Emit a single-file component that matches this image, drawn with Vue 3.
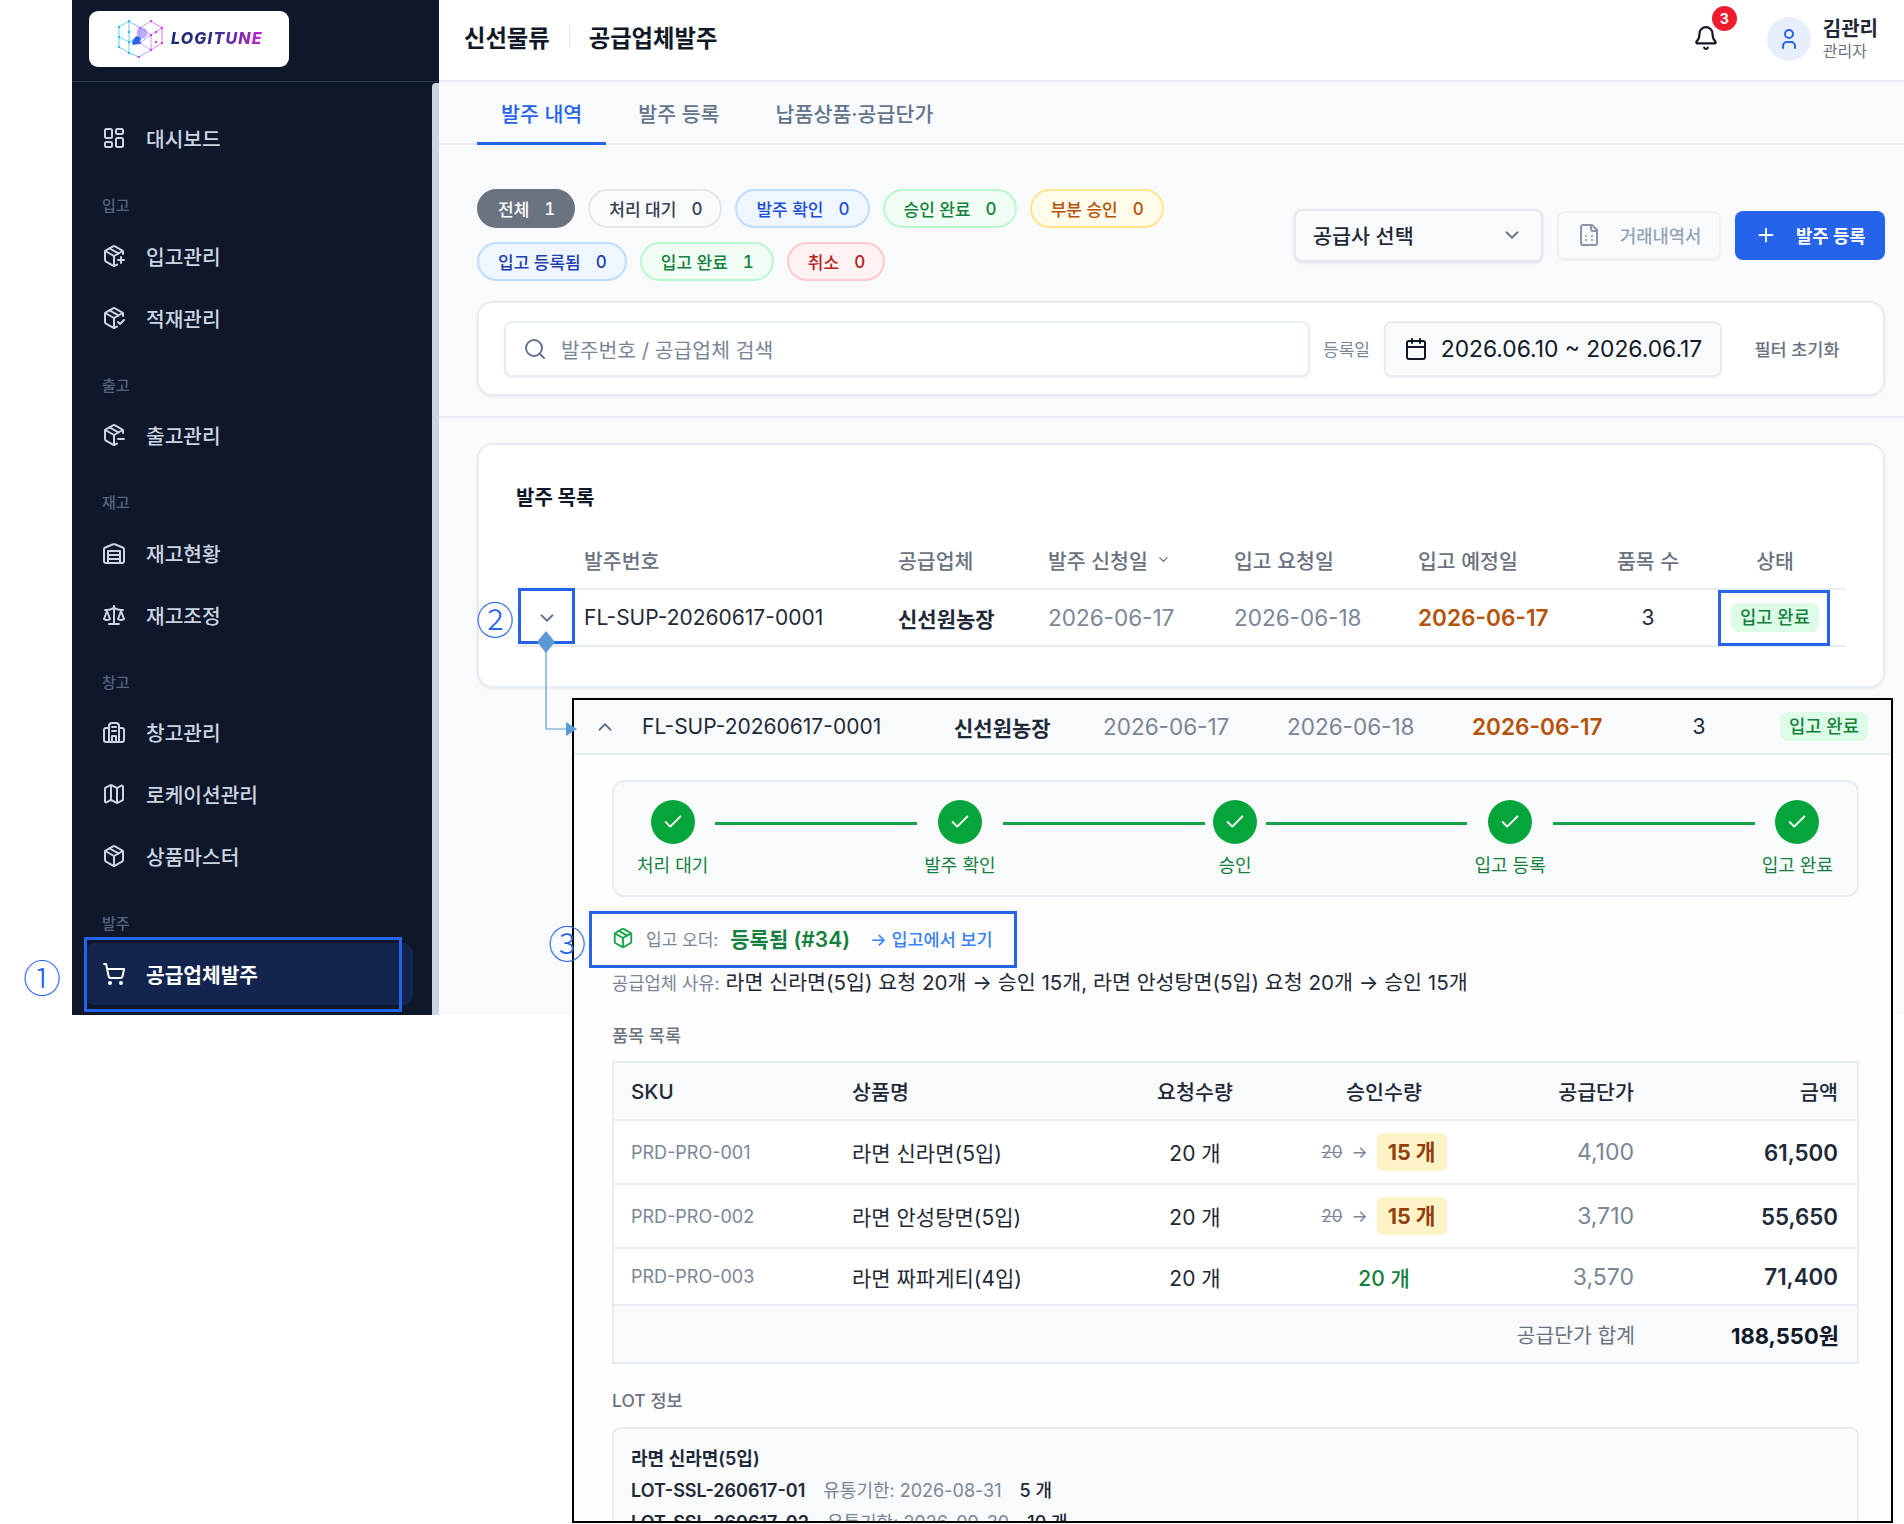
<template>
  <div class="page">
    <div class="app">
      <aside class="sidebar">
        <div class="side-head">
          <div class="logo">
            <svg class="logo-mark" viewBox="0 0 45 38" fill="none">
              <defs>
                <linearGradient id="lg" gradientUnits="userSpaceOnUse" x1="0" y1="0" x2="45" y2="0">
                  <stop offset="0" stop-color="#22d3ee" />
                  <stop offset="0.4" stop-color="#60a5fa" />
                  <stop offset="0.65" stop-color="#a78bfa" />
                  <stop offset="1" stop-color="#d946ef" />
                </linearGradient>
              </defs>
              <g stroke="url(#lg)" stroke-width="0.9" stroke-dasharray="1.5 1.1">
                <path d="M1 7 11 1v32L1 27zM1 17l10 5 10-6M11 1l11 7M11 33l10 4 12-7" />
                <path d="M22 8 33 1l11 7v15l-11 7-11-7zM22 8l11 7 11-7M33 15v15M22 23l11-8" />
              </g>
              <circle v-for="d in logoDots" :key="d[0] + '-' + d[1]" :cx="d[0]" :cy="d[1]" r="1.2" :fill="d[0] < 20 ? '#22c4ee' : '#d13ef0'" />
              <circle cx="24" cy="13" r="5.5" fill="#a78bfa" opacity="0.7" />
              <path d="M14 22l4-6 5 2-2 6-6 1z" fill="#2563eb" />
            </svg>
            <span class="logo-text">LOGITUNE</span>
          </div>
        </div>
        <div class="side-body">
          <nav class="nav">
            <template v-for="entry in navEntries" :key="entry.label">
              <div v-if="entry.section" class="nav-section">{{ entry.label }}</div>
              <a v-else class="nav-item" :class="{ active: entry.active }">
                <svg class="ico-nav" viewBox="0 0 24 24" v-html="icons[entry.icon]"></svg>
                <span>{{ entry.label }}</span>
              </a>
            </template>
          </nav>
          <div class="side-scroll"></div>
        </div>
      </aside>

      <div class="main">
        <header class="topbar">
          <div class="crumbs">
            <span>신선물류</span>
            <i class="crumb-sep"></i>
            <span>공급업체발주</span>
          </div>
          <div class="bell">
            <svg class="ico-bell" viewBox="0 0 24 24" v-html="icons.bell"></svg>
            <span class="bell-badge">3</span>
          </div>
          <div class="user">
            <div class="avatar">
              <svg viewBox="0 0 24 24" v-html="icons.user"></svg>
            </div>
            <div class="user-text">
              <strong>김관리</strong>
              <small>관리자</small>
            </div>
          </div>
        </header>

        <div class="tabs">
          <a v-for="(t, i) in tabs" :key="t" class="tab" :class="{ on: i === 0 }">{{ t }}</a>
        </div>

        <section class="filters">
          <div class="toolbar">
            <div class="chips">
              <span v-for="c in chips" :key="c.label" class="chip" :class="c.cls">
                {{ c.label }}<b>{{ c.count }}</b>
              </span>
            </div>
            <div class="actions">
              <div class="select">
                <span>공급사 선택</span>
                <svg viewBox="0 0 24 24" v-html="icons.chevDown"></svg>
              </div>
              <button class="btn-ghost">
                <svg viewBox="0 0 24 24" v-html="icons.fileGrid"></svg>
                거래내역서
              </button>
              <button class="btn-primary">
                <svg viewBox="0 0 24 24" v-html="icons.plus"></svg>
                발주 등록
              </button>
            </div>
          </div>
          <div class="filter-card">
            <div class="search">
              <svg viewBox="0 0 24 24" v-html="icons.search"></svg>
              <span>발주번호 / 공급업체 검색</span>
            </div>
            <span class="date-label">등록일</span>
            <div class="date-box">
              <svg viewBox="0 0 24 24" v-html="icons.calendar"></svg>
              <span>2026.06.10 ~ 2026.06.17</span>
            </div>
            <a class="reset">필터 초기화</a>
          </div>
        </section>

        <section class="list-card">
          <h3>발주 목록</h3>
          <div class="order-grid list-head">
            <span></span>
            <span>발주번호</span>
            <span>공급업체</span>
            <span class="sort">발주 신청일
              <svg viewBox="0 0 24 24" v-html="icons.chevDown"></svg>
            </span>
            <span>입고 요청일</span>
            <span>입고 예정일</span>
            <span class="mid">품목 수</span>
            <span class="mid">상태</span>
          </div>
          <div class="order-grid list-row">
            <svg class="row-chev" viewBox="0 0 24 24" v-html="icons.chevDown"></svg>
            <span>{{ order.no }}</span>
            <strong>{{ order.supplier }}</strong>
            <span class="muted date">{{ order.applied }}</span>
            <span class="muted date">{{ order.requested }}</span>
            <strong class="due">{{ order.due }}</strong>
            <span class="mid">{{ order.items }}</span>
            <span class="mid"><em class="badge">{{ order.status }}</em></span>
          </div>
        </section>
      </div>
    </div>

    <div class="detail">
      <div class="order-grid detail-row">
        <svg class="row-chev" viewBox="0 0 24 24" v-html="icons.chevUp"></svg>
        <span>{{ order.no }}</span>
        <strong>{{ order.supplier }}</strong>
        <span class="muted date">{{ order.applied }}</span>
        <span class="muted date">{{ order.requested }}</span>
        <strong class="due">{{ order.due }}</strong>
        <span class="mid">{{ order.items }}</span>
        <span class="mid"><em class="badge">{{ order.status }}</em></span>
      </div>

      <div class="detail-body">
        <div class="stepper">
          <template v-for="(s, i) in steps" :key="s">
            <i v-if="i > 0" class="step-line"></i>
            <div class="step">
              <span class="step-dot">
                <svg viewBox="0 0 24 24"><path d="M20 6 9 17l-5-5" /></svg>
              </span>
              <span class="step-label">{{ s }}</span>
            </div>
          </template>
        </div>

        <div class="inbound">
          <svg viewBox="0 0 24 24" v-html="icons.package"></svg>
          <span class="in-label">입고 오더:</span>
          <strong>등록됨 (#34)</strong>
          <a>→ 입고에서 보기</a>
        </div>

        <p class="reason">
          <span>공급업체 사유:</span>
          라면 신라면(5입) 요청 20개 → 승인 15개, 라면 안성탕면(5입) 요청 20개 → 승인 15개
        </p>

        <h4 class="sub-title">품목 목록</h4>
        <div class="items">
          <div class="item-grid item-head">
            <span>SKU</span>
            <span>상품명</span>
            <span class="mid">요청수량</span>
            <span class="mid">승인수량</span>
            <span class="end">공급단가</span>
            <span class="end">금액</span>
          </div>
          <div v-for="it in items" :key="it.sku" class="item-grid item-row" :class="{ tall: it.partial }">
            <span class="sku">{{ it.sku }}</span>
            <span>{{ it.name }}</span>
            <span class="mid">{{ it.req }} 개</span>
            <span v-if="it.partial" class="mid approved">
              <s>{{ it.req }}</s>
              <i>→</i>
              <b>{{ it.ok }} 개</b>
            </span>
            <span v-else class="mid ok-qty">{{ it.ok }} 개</span>
            <span class="end muted price">{{ it.price }}</span>
            <strong class="end amount">{{ it.amount }}</strong>
          </div>
          <div class="item-foot">
            <span>공급단가 합계</span>
            <strong>188,550원</strong>
          </div>
        </div>

        <h4 class="sub-title lot-title">LOT 정보</h4>
        <div class="lot-box">
          <div class="lot-name">라면 신라면(5입)</div>
          <div v-for="l in lots" :key="l.no" class="lot-line">
            <b>{{ l.no }}</b>
            <span>유통기한: {{ l.exp }}</span>
            <em>{{ l.qty }} 개</em>
          </div>
        </div>
      </div>

      <div class="hl hl-inbound"></div>
    </div>

    <!-- 설명용 표시 -->
    <span class="mark mark-1">①</span>
    <span class="mark mark-2">②</span>
    <span class="mark mark-3">③</span>
    <div class="hl hl-nav"></div>
    <div class="hl hl-chev"></div>
    <div class="hl hl-status"></div>

    <svg class="connector" viewBox="0 0 50 120" fill="none">
      <path d="M14 20V105H36" stroke="#5b9bd5" stroke-width="1.2" />
      <path d="M14 7l9 11-9 11-9-11z" fill="#5b9bd5" />
      <path d="M34 98l11 7-11 7z" fill="#5b9bd5" />
    </svg>
  </div>
</template>

<script setup>
const pkgBody =
  '<path d="M21 10V8a2 2 0 0 0-1-1.73l-7-4a2 2 0 0 0-2 0l-7 4A2 2 0 0 0 3 8v8a2 2 0 0 0 1 1.73l7 4a2 2 0 0 0 2 0l2-1.14"/><path d="m7.5 4.27 9 5.15"/><polyline points="3.29 7 12 12 20.71 7"/><line x1="12" x2="12" y1="22" y2="12"/>'

const icons = {
  dashboard:
    '<rect x="3" y="3" width="7" height="9" rx="1.5"/><rect x="14" y="3" width="7" height="5" rx="1.5"/><rect x="14" y="12" width="7" height="9" rx="1.5"/><rect x="3" y="16" width="7" height="5" rx="1.5"/>',
  pkgPlus: '<path d="M16 16h6"/><path d="M19 13v6"/>' + pkgBody,
  pkgCheck: '<path d="m16 16 2 2 4-4"/>' + pkgBody,
  pkgMinus: '<path d="M16 16h6"/>' + pkgBody,
  package:
    '<path d="M11 21.73a2 2 0 0 0 2 0l7-4A2 2 0 0 0 21 16V8a2 2 0 0 0-1-1.73l-7-4a2 2 0 0 0-2 0l-7 4A2 2 0 0 0 3 8v8a2 2 0 0 0 1 1.73z"/><path d="M12 22V12"/><polyline points="3.29 7 12 12 20.71 7"/><path d="m7.5 4.27 9 5.15"/>',
  warehouse:
    '<path d="M22 8.35V20a2 2 0 0 1-2 2H4a2 2 0 0 1-2-2V8.35A2 2 0 0 1 3.26 6.5l8-3.2a2 2 0 0 1 1.48 0l8 3.2A2 2 0 0 1 22 8.35Z"/><path d="M6 18h12"/><path d="M6 14h12"/><rect x="6" y="10" width="12" height="12"/>',
  scale:
    '<path d="m16 16 3-8 3 8c-.87.65-1.92 1-3 1s-2.13-.35-3-1Z"/><path d="m2 16 3-8 3 8c-.87.65-1.92 1-3 1s-2.13-.35-3-1Z"/><path d="M7 21h10"/><path d="M12 3v18"/><path d="M3 7h2c2 0 5-1 7-2 2 1 5 2 7 2h2"/>',
  building:
    '<path d="M2 20a2 2 0 0 0 2 2h16a2 2 0 0 0 2-2V10a2 2 0 0 0-2-2h-3V6a3 3 0 0 0-3-3h-4a3 3 0 0 0-3 3v2H4a2 2 0 0 0-2 2z"/><path d="M7 22V8"/><path d="M17 22V8"/><path d="M10 7h4"/><path d="M10 11h4"/><path d="M10 22v-6h4v6"/>',
  map:
    '<path d="M14.106 5.553a2 2 0 0 0 1.788 0l3.659-1.83A1 1 0 0 1 21 4.619v12.764a1 1 0 0 1-.553.894l-4.553 2.277a2 2 0 0 1-1.788 0l-4.212-2.106a2 2 0 0 0-1.788 0l-3.659 1.83A1 1 0 0 1 3 19.381V6.618a1 1 0 0 1 .553-.894l4.553-2.277a2 2 0 0 1 1.788 0z"/><path d="M15 5.764v15"/><path d="M9 3.236v15"/>',
  cart:
    '<circle cx="8" cy="21" r="1"/><circle cx="19" cy="21" r="1"/><path d="M2.05 2.05h2l2.66 12.42a2 2 0 0 0 2 1.58h9.78a2 2 0 0 0 1.95-1.57l1.65-7.43H5.12"/>',
  bell:
    '<path d="M10.268 21a2 2 0 0 0 3.464 0"/><path d="M3.262 15.326A1 1 0 0 0 4 17h16a1 1 0 0 0 .74-1.673C19.41 13.956 18 12.499 18 8A6 6 0 0 0 6 8c0 4.499-1.411 5.956-2.738 7.326"/>',
  user: '<path d="M18 21v-2a4 4 0 0 0-4-4h-4a4 4 0 0 0-4 4v2"/><circle cx="12" cy="7" r="4"/>',
  chevDown: '<path d="m6 9 6 6 6-6"/>',
  chevUp: '<path d="m18 15-6-6-6 6"/>',
  plus: '<path d="M5 12h14"/><path d="M12 5v14"/>',
  search: '<circle cx="11" cy="11" r="8"/><path d="m21 21-4.3-4.3"/>',
  calendar:
    '<path d="M8 2v4"/><path d="M16 2v4"/><rect x="3" y="4" width="18" height="18" rx="2"/><path d="M3 10h18"/>',
  fileGrid:
    '<path d="M15 2H6a2 2 0 0 0-2 2v16a2 2 0 0 0 2 2h12a2 2 0 0 0 2-2V7z"/><path d="M14 2v4a2 2 0 0 0 2 2h4"/><path d="M9 13h.01M15 13h.01M9 17h.01M15 17h.01"/>',
}

const logoDots = [
  [1, 7], [11, 1], [1, 17], [1, 27], [11, 12], [11, 22], [11, 33],
  [22, 8], [33, 1], [44, 8], [33, 15], [44, 23], [33, 30], [22, 23], [21, 37], [38, 12], [38, 22],
]

const navEntries = [
  { label: '대시보드', icon: 'dashboard' },
  { label: '입고', section: true },
  { label: '입고관리', icon: 'pkgPlus' },
  { label: '적재관리', icon: 'pkgCheck' },
  { label: '출고', section: true },
  { label: '출고관리', icon: 'pkgMinus' },
  { label: '재고', section: true },
  { label: '재고현황', icon: 'warehouse' },
  { label: '재고조정', icon: 'scale' },
  { label: '창고', section: true },
  { label: '창고관리', icon: 'building' },
  { label: '로케이션관리', icon: 'map' },
  { label: '상품마스터', icon: 'package' },
  { label: '발주', section: true },
  { label: '공급업체발주', icon: 'cart', active: true },
]

const tabs = ['발주 내역', '발주 등록', '납품상품·공급단가']

const chips = [
  { label: '전체', count: 1, cls: 'c-all' },
  { label: '처리 대기', count: 0, cls: 'c-gray' },
  { label: '발주 확인', count: 0, cls: 'c-blue' },
  { label: '승인 완료', count: 0, cls: 'c-green' },
  { label: '부분 승인', count: 0, cls: 'c-amber' },
  { label: '입고 등록됨', count: 0, cls: 'c-navy' },
  { label: '입고 완료', count: 1, cls: 'c-green' },
  { label: '취소', count: 0, cls: 'c-red' },
]

const order = {
  no: 'FL-SUP-20260617-0001',
  supplier: '신선원농장',
  applied: '2026-06-17',
  requested: '2026-06-18',
  due: '2026-06-17',
  items: 3,
  status: '입고 완료',
}

const steps = ['처리 대기', '발주 확인', '승인', '입고 등록', '입고 완료']

const items = [
  { sku: 'PRD-PRO-001', name: '라면 신라면(5입)', req: 20, ok: 15, partial: true, price: '4,100', amount: '61,500' },
  { sku: 'PRD-PRO-002', name: '라면 안성탕면(5입)', req: 20, ok: 15, partial: true, price: '3,710', amount: '55,650' },
  { sku: 'PRD-PRO-003', name: '라면 짜파게티(4입)', req: 20, ok: 20, partial: false, price: '3,570', amount: '71,400' },
]

const lots = [
  { no: 'LOT-SSL-260617-01', exp: '2026-08-31', qty: 5 },
  { no: 'LOT-SSL-260617-02', exp: '2026-09-30', qty: 10 },
]
</script>

<style>
body {
  background: #fff;
}
</style>

<style scoped>
.page {
  position: relative;
  width: 1904px;
  height: 1524px;
  overflow: hidden;
  background: #fff;
  font-family: Inter, "Noto Sans CJK KR", sans-serif;
  color: #1f2937;
}

svg {
  fill: none;
  stroke: currentColor;
  stroke-width: 2;
  stroke-linecap: round;
  stroke-linejoin: round;
  flex: none;
}

.app {
  display: flex;
  width: 1832px;
  height: 1015px;
  margin-left: 72px;
  overflow: hidden;
}

/* 사이드바 */
.sidebar {
  width: 367px;
  flex: none;
  background: #0f172a;
  display: flex;
  flex-direction: column;
}

.side-head {
  height: 82px;
  flex: none;
  box-sizing: border-box;
  padding: 11px 0 0 17px;
  border-bottom: 1px solid #2a3650;
}

.logo {
  width: 200px;
  height: 56px;
  background: #fff;
  border-radius: 9px;
  display: flex;
  align-items: center;
  padding-left: 29px;
  box-sizing: border-box;
  gap: 8px;
}

.logo-mark {
  width: 45px;
  height: 38px;
  stroke: none;
}

.logo-text {
  font-size: 16px;
  line-height: 16px;
  margin-bottom: 3px;
  font-weight: 800;
  font-style: italic;
  letter-spacing: 1.2px;
  background: linear-gradient(90deg, #1e2a6b 0%, #2b2f80 45%, #c026d3 100%);
  -webkit-background-clip: text;
  background-clip: text;
  color: transparent;
}

.side-body {
  flex: 1;
  display: flex;
  min-height: 0;
}

.nav {
  flex: 1;
  padding: 25px 0 0 12px;
}

.side-scroll {
  width: 7px;
  background: #cbd5e1;
  border-radius: 4px 0 0 0;
  margin-top: 1px;
}

.nav-item {
  display: flex;
  align-items: center;
  gap: 20px;
  width: 329px;
  height: 62px;
  padding-left: 18px;
  box-sizing: border-box;
  font-size: 20.3px;
  font-weight: 500;
  color: #cbd5e1;
  border-radius: 11px;
}

.nav-item.active {
  background: #13244f;
  color: #fff;
  font-weight: 700;
}

.ico-nav {
  width: 24px;
  height: 24px;
}

.nav-section {
  height: 55.6px;
  box-sizing: border-box;
  padding: 27px 0 0 18px;
  font-size: 15px;
  line-height: 20px;
  color: #55647e;
  font-weight: 500;
}

/* 본문 */
.main {
  flex: 1;
  min-width: 0;
  background: #f8fafc;
}

.topbar {
  height: 82px;
  box-sizing: border-box;
  background: #fff;
  border-bottom: 2px solid #e5eaf1;
  display: flex;
  align-items: center;
  padding: 0 26px 0 25px;
}

.crumbs {
  display: flex;
  align-items: center;
  gap: 19px;
  font-size: 23.3px;
  font-weight: 600;
  color: #111827;
  flex: 1;
  margin-bottom: 7px;
}

.crumb-sep {
  width: 1px;
  height: 23px;
  background: #e5e7eb;
}

.bell {
  position: relative;
  width: 26px;
  height: 26px;
  margin-right: 48px;
  margin-bottom: 5px;
}

.ico-bell {
  width: 26px;
  height: 26px;
  color: #111827;
}

.bell-badge {
  position: absolute;
  left: 19px;
  top: -19px;
  width: 25px;
  height: 25px;
  border-radius: 50%;
  background: #ef1c2e;
  color: #fff;
  font-size: 14px;
  font-weight: 700;
  text-align: center;
  line-height: 25px;
}

.user {
  display: flex;
  align-items: center;
  gap: 12px;
  margin-bottom: 2px;
}

.avatar {
  width: 44px;
  height: 44px;
  border-radius: 50%;
  background: #e8eefc;
  color: #2563eb;
  display: flex;
  align-items: center;
  justify-content: center;
}

.avatar svg {
  width: 24px;
  height: 24px;
}

.user-text {
  display: flex;
  flex-direction: column;
  line-height: 1;
}

.user-text strong {
  font-size: 20px;
  font-weight: 600;
  color: #1f2937;
  line-height: 24px;
}

.user-text small {
  font-size: 16px;
  color: #6b7280;
  line-height: 20px;
}

.tabs {
  height: 63px;
  box-sizing: border-box;
  padding-left: 38px;
  display: flex;
  border-bottom: 2px solid #e5eaf1;
}

.tab {
  padding: 0 24px;
  margin-right: 8px;
  height: 63px;
  box-sizing: border-box;
  font-size: 20.6px;
  font-weight: 500;
  line-height: 66px;
  color: #64748b;
}

.tab.on {
  color: #2563eb;
  border-bottom: 3px solid #2563eb;
}

.filters {
  padding: 44px 19px 20px 38px;
  border-bottom: 2px solid #e5eaf1;
}

.toolbar {
  display: flex;
  align-items: center;
  justify-content: space-between;
}

.chips {
  display: flex;
  flex-wrap: wrap;
  gap: 14px 13px;
  width: 720px;
}

.chip {
  display: inline-flex;
  align-items: center;
  height: 39px;
  box-sizing: border-box;
  padding: 0 18px 0 19px;
  border-radius: 20px;
  border: 2px solid transparent;
  font-size: 17px;
  font-weight: 500;
  white-space: nowrap;
}

.chip b {
  font-weight: 500;
  margin-left: 15px;
  font-variant-numeric: tabular-nums;
}

.c-all { background: #6b7280; color: #fff; min-width: 96px; }
.c-gray { background: #f9fafb; border-color: #e5e7eb; color: #374151; }
.c-blue { background: #eff6ff; border-color: #bfdbfe; color: #1d4ed8; }
.c-navy { background: #eff6ff; border-color: #bfdbfe; color: #1e40af; }
.c-green { background: #f0fdf4; border-color: #bbf7d0; color: #15803d; }
.c-amber { background: #fffbeb; border-color: #fde68a; color: #b45309; }
.c-red { background: #fef2f2; border-color: #fecaca; color: #b91c1c; }

.actions {
  display: flex;
  align-items: center;
  gap: 14px;
}

.select {
  width: 249px;
  height: 53px;
  box-sizing: border-box;
  background: #f8fafc;
  border: 2px solid #e5eaf1;
  border-radius: 8px;
  box-shadow: 0 1px 3px rgba(15, 23, 42, 0.12);
  display: flex;
  align-items: center;
  justify-content: space-between;
  padding: 0 18px 0 17px;
  font-size: 20.7px;
  font-weight: 500;
  color: #1f2937;
}

.select svg {
  width: 22px;
  height: 22px;
  color: #64748b;
}

.btn-ghost,
.btn-primary {
  height: 49px;
  box-sizing: border-box;
  border-radius: 8px;
  display: flex;
  align-items: center;
  font-family: inherit;
  font-size: 17.7px;
  font-weight: 500;
}

.btn-ghost {
  width: 164px;
  gap: 19px;
  padding-left: 18px;
  background: #f8fafc;
  border: 2px solid #eef1f6;
  color: #94a3b8;
  box-shadow: 0 1px 2px rgba(15, 23, 42, 0.06);
}

.btn-ghost svg {
  width: 24px;
  height: 24px;
  color: #8b95a5;
}

.btn-primary {
  width: 150px;
  gap: 19px;
  padding-left: 20px;
  background: #2563eb;
  border: none;
  color: #fff;
  font-weight: 600;
}

.btn-primary svg {
  width: 22px;
  height: 22px;
}

.filter-card {
  margin-top: 20px;
  height: 95px;
  box-sizing: border-box;
  background: #fff;
  border: 2px solid #e8edf3;
  border-radius: 16px;
  box-shadow: 0 1px 3px rgba(15, 23, 42, 0.08);
  padding: 0 25px;
  display: flex;
  align-items: center;
}

.search {
  flex: 1;
  height: 56px;
  box-sizing: border-box;
  border: 2px solid #e8edf3;
  border-radius: 8px;
  box-shadow: 0 1px 2px rgba(15, 23, 42, 0.08);
  display: flex;
  align-items: center;
  gap: 14px;
  padding-left: 17px;
  font-size: 20.4px;
  color: #7b8696;
}

.search svg {
  width: 24px;
  height: 24px;
  color: #64748b;
}

.date-label {
  margin: 0 14px 0 13px;
  font-size: 17px;
  color: #7b8696;
}

.date-box {
  width: 338px;
  height: 56px;
  box-sizing: border-box;
  background: #f8fafc;
  border: 2px solid #e8edf3;
  border-radius: 8px;
  box-shadow: 0 1px 2px rgba(15, 23, 42, 0.08);
  display: flex;
  align-items: center;
  justify-content: center;
  gap: 13px;
  font-size: 22.8px;
  color: #111827;
}

.date-box svg {
  width: 24px;
  height: 24px;
}

.reset {
  width: 122px;
  margin-left: 14px;
  text-align: center;
  font-size: 17.5px;
  font-weight: 500;
  color: #6b7280;
}

.list-card {
  margin: 25px 19px 0 38px;
  height: 245px;
  box-sizing: border-box;
  background: #fff;
  border: 2px solid #e8edf3;
  border-radius: 16px;
  box-shadow: 0 1px 3px rgba(15, 23, 42, 0.08);
  padding: 0 37px;
}

.list-card h3 {
  margin: 0;
  padding-top: 39px;
  font-size: 20px;
  line-height: 28px;
  font-weight: 700;
  color: #111827;
}

.order-grid {
  display: grid;
  align-items: center;
  font-size: 21px;
  color: #1f2937;
}

.list-head,
.list-row {
  grid-template-columns: 68px 314px 150px 186px 184px 172px 116px 138px;
}

.list-head {
  height: 65px;
  margin-top: 13px;
  box-sizing: border-box;
  padding-top: 6px;
  border-bottom: 2px solid #e8edf3;
  font-size: 20.5px;
  font-weight: 500;
  color: #6b7280;
}

.list-row {
  height: 57px;
  box-sizing: border-box;
  border-bottom: 2px solid #e8edf3;
}

.order-grid strong {
  font-weight: 600;
}

.order-grid .date {
  font-size: 22.5px;
}

.order-grid .due {
  font-size: 22.6px;
  color: #b45309;
}

.sort {
  display: flex;
  align-items: center;
  gap: 8px;
}

.sort svg {
  width: 15px;
  height: 15px;
}

.mid {
  text-align: center;
}

.end {
  text-align: right;
}

.muted {
  color: #7b8696;
}

.row-chev {
  width: 22px;
  height: 22px;
  color: #64748b;
  margin-left: 20px;
}

.badge {
  display: inline-block;
  font-style: normal;
  font-size: 17.7px;
  font-weight: 500;
  line-height: 29px;
  padding: 0 9px;
  border-radius: 8px;
  background: #dcfce7;
  color: #15803d;
}

/* 펼친 상세 패널 */
.detail {
  position: absolute;
  left: 572px;
  top: 698px;
  width: 1321px;
  height: 825px;
  box-sizing: border-box;
  border: 2px solid #000;
  background: #fdfdfe;
  overflow: hidden;
}

.detail-row {
  grid-template-columns: 68px 312px 149px 184px 185px 170px 114px 136px;
  height: 55px;
  box-sizing: border-box;
  background: #f8fafc;
  border-bottom: 2px solid #e8edf3;
}

.detail-body {
  padding: 25px 32px 0 38px;
}

.stepper {
  height: 117px;
  box-sizing: border-box;
  background: #f8fafc;
  border: 2px solid #e8edf3;
  border-radius: 12px;
  padding: 18px 24px 0 23px;
  display: flex;
  align-items: flex-start;
}

.step {
  min-width: 47px;
  display: flex;
  flex-direction: column;
  align-items: center;
}

.step-dot {
  width: 44px;
  height: 44px;
  border-radius: 50%;
  background: #05a53c;
  display: flex;
  align-items: center;
  justify-content: center;
}

.step-dot svg {
  width: 22px;
  height: 22px;
  color: #fff;
}

.step-label {
  margin-top: 10px;
  font-size: 18px;
  line-height: 24px;
  font-weight: 400;
  color: #15803d;
  white-space: nowrap;
}

.step-line {
  flex: 1;
  height: 3px;
  margin: 22px 7px 0;
  background: #16a34a;
}

.inbound {
  display: flex;
  align-items: center;
  margin-top: 13px;
  height: 56px;
}

.inbound svg {
  width: 22px;
  height: 22px;
  color: #16a34a;
  margin-right: 12px;
}

.in-label {
  font-size: 17px;
  color: #7b8696;
  margin-right: 12px;
}

.inbound strong {
  font-size: 21px;
  font-weight: 600;
  color: #15803d;
  margin-right: 20px;
}

.inbound a {
  font-size: 17.5px;
  font-weight: 500;
  color: #3b82f6;
}

.reason {
  margin: 2px 0 0;
  font-size: 20.6px;
  line-height: 30px;
  color: #1f2937;
  white-space: nowrap;
}

.reason span {
  font-size: 17.7px;
  color: #7b8696;
}

.sub-title {
  margin: 25px 0 0;
  font-size: 17.5px;
  line-height: 24px;
  font-weight: 500;
  color: #6b7280;
}

.items {
  margin-top: 13px;
  border: 2px solid #e8edf3;
  height: 303px;
  box-sizing: border-box;
  display: flex;
  flex-direction: column;
}

.item-grid {
  display: grid;
  grid-template-columns: 221px 268px 150px 228px 136px 204px;
  align-items: center;
  padding: 0 17px;
  font-size: 21px;
  color: #1f2937;
}

.item-head {
  height: 56px;
  flex: none;
  background: #f8fafc;
  font-size: 20.6px;
  font-weight: 500;
  border-bottom: 2px solid #e8edf3;
}

.item-row {
  height: 57px;
  flex: none;
  box-sizing: border-box;
  border-bottom: 2px solid #e8edf3;
  background: #fff;
}

.item-row.tall {
  height: 64px;
}

.item-row strong {
  font-weight: 600;
}

.sku {
  font-size: 18px;
  color: #7b8696;
}

.price {
  font-size: 23px;
}

.amount {
  font-size: 22.3px;
}

.approved {
  display: flex;
  align-items: center;
  justify-content: center;
  gap: 9px;
}

.approved s {
  font-size: 17px;
  color: #7b8696;
}

.approved i {
  font-style: normal;
  font-size: 17px;
  color: #7b8696;
}

.approved b {
  background: #fef3c7;
  color: #92400e;
  font-size: 21.5px;
  font-weight: 700;
  border-radius: 6px;
  padding: 5px 11px;
  line-height: 28px;
}

.ok-qty {
  color: #15803d;
  font-weight: 500;
}

.item-foot {
  flex: 1;
  background: #f8fafc;
  display: flex;
  align-items: center;
  justify-content: flex-end;
  padding-right: 18px;
  font-size: 22px;
}

.item-foot span {
  font-size: 20.4px;
  color: #6b7280;
  margin-right: 96px;
}

.item-foot strong {
  font-weight: 700;
  color: #111827;
}

.lot-title {
  margin-top: 25px;
}

.lot-box {
  margin-top: 14px;
  height: 200px;
  box-sizing: border-box;
  background: #f8fafc;
  border: 2px solid #e8edf3;
  border-radius: 8px;
  padding: 17px 17px;
}

.lot-name {
  font-size: 18px;
  font-weight: 600;
  line-height: 26px;
  color: #1f2937;
}

.lot-line {
  margin-top: 6px;
  display: flex;
  gap: 18px;
  font-size: 18px;
  line-height: 26px;
  color: #1f2937;
}

.lot-line b {
  font-weight: 600;
}

.lot-line span {
  color: #7b8696;
}

.lot-line em {
  font-style: normal;
  font-weight: 500;
}

/* 표시 상자 */
.hl {
  position: absolute;
  box-sizing: border-box;
  border: 3px solid #2563eb;
  pointer-events: none;
}

.hl-nav { left: 84px; top: 937px; width: 318px; height: 75px; }
.hl-chev { left: 518px; top: 588px; width: 57px; height: 56px; }
.hl-status { left: 1718px; top: 590px; width: 112px; height: 56px; }
.hl-inbound { left: 15px; top: 211px; width: 428px; height: 57px; }

.mark {
  position: absolute;
  font-family: "Noto Sans CJK KR", sans-serif;
  font-size: 38px;
  line-height: 38px;
  font-weight: 300;
  color: #2563eb;
}

.mark-1 { left: 23px; top: 957px; }
.mark-2 { left: 476px; top: 599px; }
.mark-3 { left: 548px; top: 923px; }

.connector {
  position: absolute;
  left: 532px;
  top: 624px;
  width: 50px;
  height: 120px;
  stroke: none;
}
</style>
